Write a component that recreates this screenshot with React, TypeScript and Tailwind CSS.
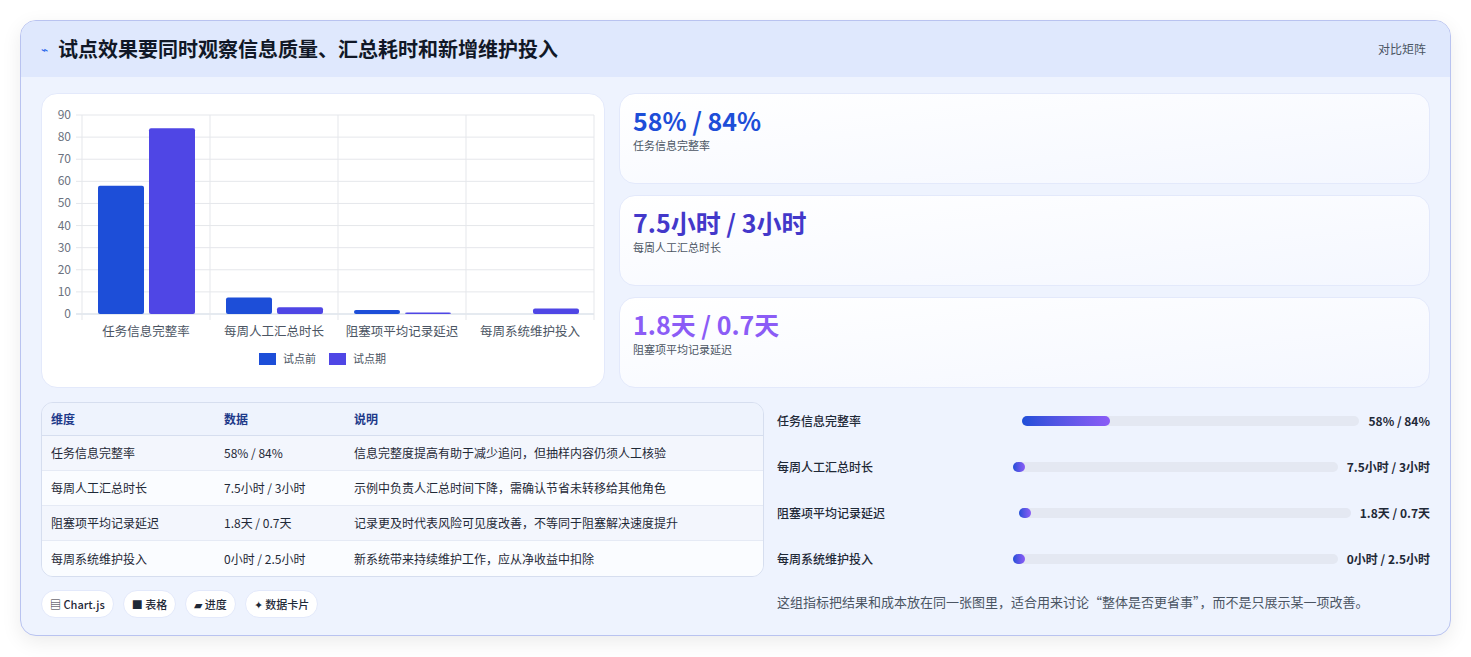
import React from 'react'

const font = { fontFamily: '"Noto Sans CJK SC", "Noto Sans", sans-serif' }

const rows = [
  { name: '任务信息完整率', data: '58% / 84%', note: '信息完整度提高有助于减少追问，但抽样内容仍须人工核验' },
  { name: '每周人工汇总时长', data: '7.5小时 / 3小时', note: '示例中负责人汇总时间下降，需确认节省未转移给其他角色' },
  { name: '阻塞项平均记录延迟', data: '1.8天 / 0.7天', note: '记录更及时代表风险可见度改善，不等同于阻塞解决速度提升' },
  { name: '每周系统维护投入', data: '0小时 / 2.5小时', note: '新系统带来持续维护工作，应从净收益中扣除' },
]

const bars = [
  { label: '任务信息完整率', a: 58, b: 84 },
  { label: '每周人工汇总时长', a: 7.5, b: 3 },
  { label: '阻塞项平均记录延迟', a: 1.8, b: 0.7 },
  { label: '每周系统维护投入', a: 0, b: 2.5 },
]

const progress = [
  { name: '任务信息完整率', value: '58% / 84%', pct: 26, lw: 245 },
  { name: '每周人工汇总时长', value: '7.5小时 / 3小时', pct: 3.5, lw: 236 },
  { name: '阻塞项平均记录延迟', value: '1.8天 / 0.7天', pct: 3.5, lw: 242 },
  { name: '每周系统维护投入', value: '0小时 / 2.5小时', pct: 3.5, lw: 236 },
]

function Chart() {
  const x0 = 40, x1 = 552, yTop = 21, yBot = 220
  const sy = (v: number) => yBot - (v / 90) * (yBot - yTop)
  const cw = (x1 - x0) / 4
  return (
    <svg width="564" height="294" style={font}>
      {Array.from({ length: 10 }).map((_, i) => (
        <g key={i}>
          <line x1={x0 - 6} x2={x1} y1={sy(i * 10)} y2={sy(i * 10)} stroke={i === 0 ? '#cbd5e1' : '#e5e7eb'} />
          <text x={29} y={sy(i * 10) + 4} fontSize="12" fill="#6b7280" textAnchor="end">{i * 10}</text>
        </g>
      ))}
      {[0, 1, 2, 3, 4].map((i) => (
        <line key={i} x1={x0 + i * cw} x2={x0 + i * cw} y1={yTop} y2={yBot + 6} stroke="#e5e7eb" />
      ))}
      {bars.map((b, i) => {
        const cx = x0 + i * cw
        return (
          <g key={i}>
            {b.a > 0 && <rect x={cx + 16} y={sy(b.a)} width={46} height={yBot - sy(b.a)} rx="2" fill="#1d4ed8" />}
            <rect x={cx + 67} y={sy(b.b)} width={46} height={yBot - sy(b.b)} rx="2" fill="#4f46e5" />
            <text x={cx + cw / 2} y={242} fontSize="12.5" fill="#4b5563" textAnchor="middle">{b.label}</text>
          </g>
        )
      })}
      <rect x={217} y={259} width={17} height={12} fill="#1d4ed8" />
      <text x={241} y={269} fontSize="11" fill="#4b5563">试点前</text>
      <rect x={287} y={259} width={17} height={12} fill="#4f46e5" />
      <text x={311} y={269} fontSize="11" fill="#4b5563">试点期</text>
    </svg>
  )
}

function Stat({ value, label, color }: { value: string; label: string; color: string }) {
  return (
    <div className="h-[91px] rounded-2xl border border-[#e3e9fb] bg-gradient-to-br from-white to-[#f4f7ff] px-[13px] pt-[10px]">
      <div className={`text-[25px] font-bold leading-[32px] ${color}`}>{value}</div>
      <div className="mt-[1px] text-[11px] text-[#4b5563]">{label}</div>
    </div>
  )
}

export default function App() {
  return (
    <div className="h-[657px] w-[1471px] bg-white px-5 pt-5" style={font}>
      <div className="h-[616px] overflow-hidden rounded-2xl border border-[#b9c3f0] bg-[#eef3fe] shadow-[0_6px_20px_rgba(0,0,0,0.08)]">
        <div className="flex h-[56px] items-center justify-between bg-[#dfe8fd] pl-5 pr-6">
          <div className="flex items-center gap-[10px]">
            <span className="text-[12px] text-[#2563eb]">⌁</span>
            <span className="text-[20px] font-bold text-[#111827]">试点效果要同时观察信息质量、汇总耗时和新增维护投入</span>
          </div>
          <span className="text-[12px] text-[#4b5563]">对比矩阵</span>
        </div>
        <div className="px-5 pt-4">
          <div className="flex gap-[14px]">
            <div className="h-[295px] w-[564px] shrink-0 rounded-2xl border border-[#e3e9fb] bg-white">
              <Chart />
            </div>
            <div className="flex flex-1 flex-col gap-[11px]">
              <Stat value="58% / 84%" label="任务信息完整率" color="text-[#1d4ed8]" />
              <Stat value="7.5小时 / 3小时" label="每周人工汇总时长" color="text-[#4338ca]" />
              <Stat value="1.8天 / 0.7天" label="阻塞项平均记录延迟" color="text-[#8b5cf6]" />
            </div>
          </div>
          <div className="mt-[14px] flex gap-[13px]">
            <div className="w-[723px] shrink-0">
              <div className="overflow-hidden rounded-xl border border-[#d6deef] text-[12px]">
                <div className="flex h-[33px] items-center border-b border-[#d6deef] bg-[#eef3fd] font-bold text-[#1e3a8a]">
                  <div className="w-[182px] pl-[9px]">维度</div>
                  <div className="w-[130px]">数据</div>
                  <div>说明</div>
                </div>
                {rows.map((r, i) => (
                  <div key={i} className={`flex h-[35px] items-center text-[#1f2937] ${i < 3 ? 'border-b border-[#e5eaf5]' : ''} ${i % 2 === 0 ? 'bg-[#f3f6fd]' : 'bg-[#fafcff]'}`}>
                    <div className="w-[182px] pl-[9px]">{r.name}</div>
                    <div className="w-[130px]">{r.data}</div>
                    <div>{r.note}</div>
                  </div>
                ))}
              </div>
              <div className="mt-[13px] flex gap-[9px] text-[11px] font-medium text-[#1f2937]">
                {['▤ Chart.js', '■ 表格', '▰ 进度', '✦ 数据卡片'].map((t) => (
                  <span key={t} className="flex h-[28px] items-center rounded-full border border-[#e3e9fb] bg-white px-[8px]">{t}</span>
                ))}
              </div>
            </div>
            <div className="flex-1 pt-[10px] text-[12px] text-[#1f2937]">
              {progress.map((p, i) => (
                <div key={i} className="mb-[28px] flex h-[18px] items-center">
                  <div className="shrink-0 font-medium" style={{ width: p.lw }}>{p.name}</div>
                  <div className="h-[10px] flex-1 rounded-full bg-[#e4e8f2]">
                    <div className="h-full min-w-[12px] rounded-full bg-gradient-to-r from-[#1d4ed8] to-[#8b5cf6]" style={{ width: `${p.pct}%` }} />
                  </div>
                  <div className="ml-[9px] shrink-0 font-bold">{p.value}</div>
                </div>
              ))}
              <div className="-mt-[4px] text-[13px] text-[#4b5563]">这组指标把结果和成本放在同一张图里，适合用来讨论“整体是否更省事”，而不是只展示某一项改善。</div>
            </div>
          </div>
        </div>
      </div>
    </div>
  )
}
